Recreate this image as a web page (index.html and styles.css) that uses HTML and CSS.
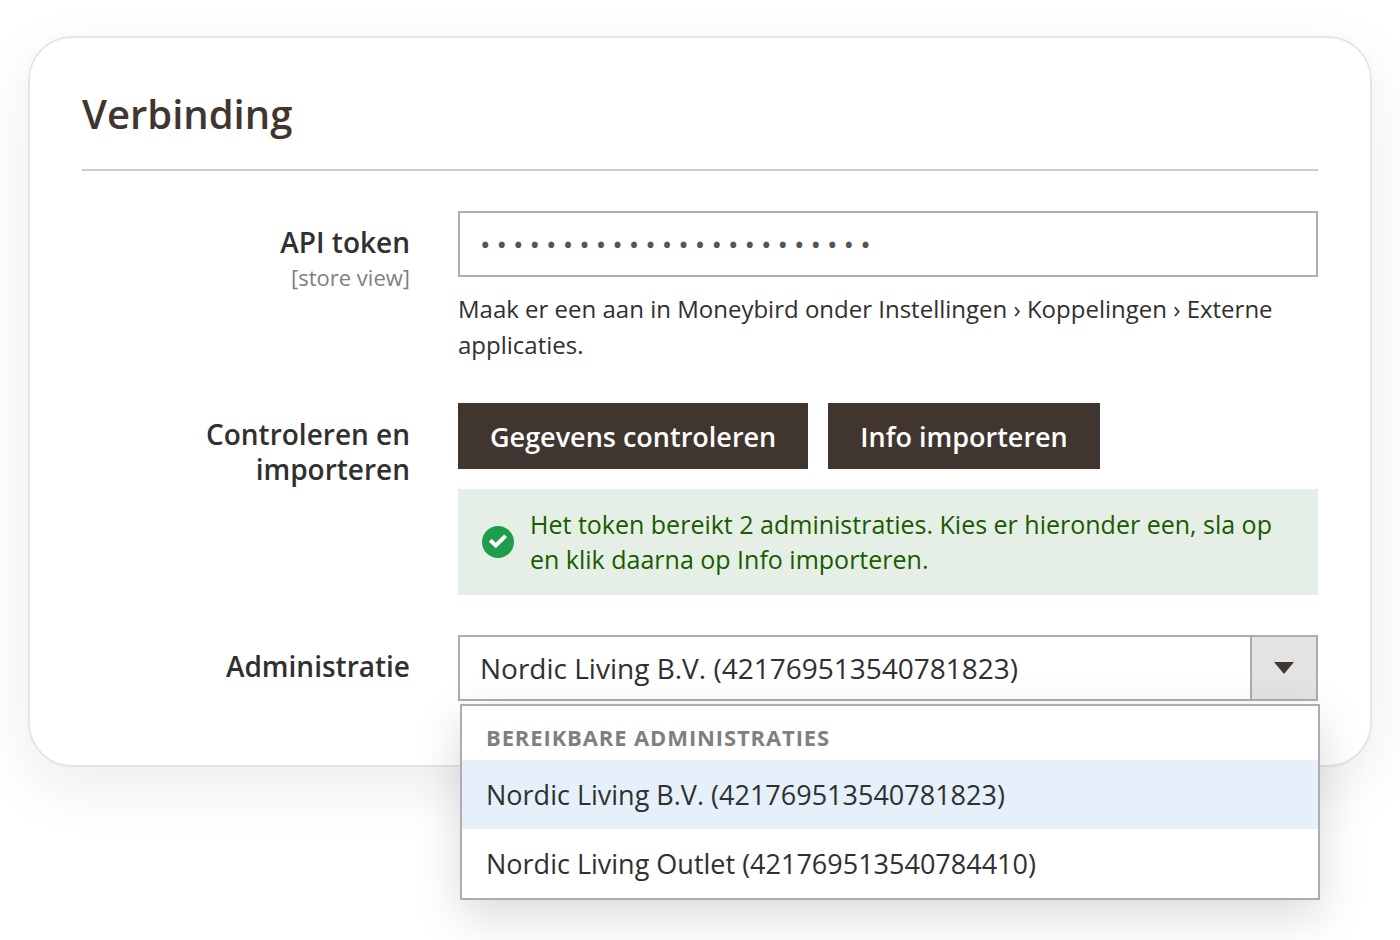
FILE: index.html
```html
<!DOCTYPE html>
<html lang="nl">
  <head>
    <meta charset="UTF-8" />
    <meta name="viewport" content="width=device-width, initial-scale=1.0" />
    <title>Verbinding</title>
    <link rel="stylesheet" href="styles.css">
  </head>
  <body>
    <form class="card">
      <h2 class="title">Verbinding</h2>

      <div class="field">
        <div class="label">
          <label for="token">API token</label>
          <span class="scope">[store view]</span>
        </div>
        <div class="control">
          <input class="input" id="token" type="password" value="abcdefghijklmnopqrstuvwx" autocomplete="off" />
          <p class="hint">Maak er een aan in Moneybird onder Instellingen › Koppelingen › Externe applicaties.</p>
        </div>
      </div>

      <div class="field">
        <div class="label" id="check-label">Controleren en importeren</div>
        <div class="control" role="group" aria-labelledby="check-label">
          <div class="buttons">
            <button class="button" type="button">Gegevens controleren</button>
            <button class="button" type="button">Info importeren</button>
          </div>
          <div class="notice" role="status">
            <svg class="notice-icon" viewBox="0 0 32 32" aria-hidden="true">
              <circle cx="16" cy="16" r="16" fill="#1f9d4d" />
              <path d="M8.2 14.3L13.8 19.5L23.6 9.8" fill="none" stroke="#fff" stroke-width="4" />
            </svg>
            <span>Het token bereikt 2 administraties. Kies er hieronder een, sla op en klik daarna op Info importeren.</span>
          </div>
        </div>
      </div>

      <div class="field">
        <div class="label">
          <label for="administration">Administratie</label>
        </div>
        <div class="control select-wrap">
          <select class="select" id="administration">
            <option selected>Nordic Living B.V. (421769513540781823)</option>
            <option>Nordic Living Outlet (421769513540784410)</option>
          </select>
          <span class="select-arrow">
            <svg width="20" height="12" viewBox="0 0 20 12" aria-hidden="true">
              <path d="M0 0H20L10 12Z" fill="#41362f" />
            </svg>
          </span>
          <div class="dropdown">
            <div class="dropdown-title" id="dropdown-title">Bereikbare administraties</div>
            <ul class="options" role="listbox" aria-labelledby="dropdown-title">
              <li class="option active" role="option" aria-selected="true">Nordic Living B.V. (421769513540781823)</li>
              <li class="option" role="option" aria-selected="false">Nordic Living Outlet (421769513540784410)</li>
            </ul>
          </div>
        </div>
      </div>
    </form>
  </body>
</html>
```

FILE: styles.css
```css
* {
  box-sizing: border-box;
}
body {
  min-height: 100vh;
  margin: 0;
  padding: 36px 28px;
  background: #fff;
  color: #303030;
  font-family: "Open Sans", "Noto Sans", sans-serif;
  font-size: 28px;
  line-height: 35px;
}
.card {
  display: flex;
  flex-direction: column;
  gap: 40px;
  padding: 49px 52px 64px;
  border: 2px solid #e5e5e5;
  border-radius: 44px;
  background: #fff;
  box-shadow: 0 20px 60px rgba(20, 30, 40, 0.08);
}
.title {
  margin: 0;
  padding-bottom: 28px;
  border-bottom: 2px solid #cccccc;
  color: #41362f;
  font-size: 40px;
  font-weight: 600;
  line-height: 54px;
}

/* rows */
.field {
  display: grid;
  grid-template-columns: 328px 1fr;
  gap: 48px;
}
.label {
  padding-top: 14px;
  font-weight: 600;
  text-align: right;
}
.label label {
  display: block;
}
.scope {
  display: block;
  color: #808080;
  font-size: 22px;
  font-weight: 400;
}
.input,
.select {
  display: block;
  width: 100%;
  height: 66px;
  margin: 0;
  padding: 0 20px;
  border: 2px solid #adadad;
  border-radius: 0;
  background: #fff;
  color: #303030;
  font-family: inherit;
  font-size: 28px;
}
.input {
  color: #555;
  letter-spacing: 6px;
}
.hint {
  margin: 14px 0 0;
  font-size: 24px;
  line-height: 36px;
}

/* buttons and result */
.buttons {
  display: flex;
  flex-wrap: wrap;
  gap: 20px;
}
.button {
  height: 66px;
  padding: 0 32px;
  border: 0;
  background: #41362f;
  color: #fff;
  font-family: inherit;
  font-size: 27px;
  font-weight: 600;
}
.notice {
  display: flex;
  align-items: center;
  gap: 16px;
  margin-top: 20px;
  padding: 18px 24px;
  background: #e5efe5;
  color: #185b00;
  font-size: 25px;
}
.notice-icon {
  flex: none;
  width: 32px;
  height: 32px;
}

/* select */
.select-wrap {
  position: relative;
}
.select {
  appearance: none;
  padding-right: 88px;
}
.select-arrow {
  position: absolute;
  top: 0;
  right: 0;
  display: flex;
  align-items: center;
  justify-content: center;
  width: 68px;
  height: 66px;
  border: 2px solid #adadad;
  background: #e3e3e3;
  pointer-events: none;
}
.dropdown {
  position: absolute;
  top: 69px;
  left: 2px;
  width: 100%;
  border: 2px solid #adadad;
  background: #fff;
  box-shadow: 0 16px 44px rgba(0, 0, 0, 0.15);
}
.dropdown-title {
  padding: 16px 24px 8px;
  color: #808080;
  font-size: 22px;
  font-weight: 700;
  letter-spacing: 0.04em;
  line-height: 30px;
  text-transform: uppercase;
}
.options {
  margin: 0;
  padding: 0;
  list-style: none;
}
.option {
  padding: 17px 24px;
  font-size: 27px;
}
.option.active {
  background: #e5f0fa;
}
```
